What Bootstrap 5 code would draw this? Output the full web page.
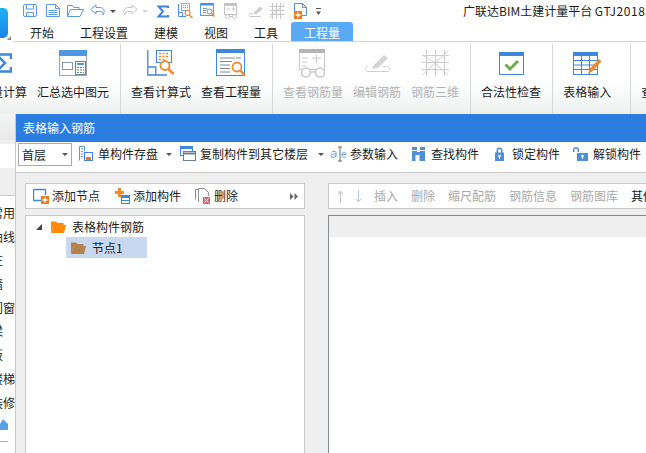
<!DOCTYPE html>
<html lang="zh-CN">
<head>
  <meta charset="UTF-8" />
  <meta name="viewport" content="width=device-width, initial-scale=1.0" />
  <title>表格输入钢筋</title>
  <link href="https://cdn.jsdelivr.net/npm/bootstrap@5.3.0/dist/css/bootstrap.min.css" rel="stylesheet" />
  <style>
    html, body { height: 100%; overflow: hidden; }
    body { font: 12px/16px "Noto Sans CJK SC", "Liberation Sans", sans-serif; color: #1c1c1c; background: #fff; }
    svg { display: block; flex: none; }

    .app-shell { width: 646px; height: 453px; overflow: hidden; }
    .logo-box { width: 13px; height: 42px; flex: none; }
    .logo-mark { width: 8px; height: 30px; margin-top: 8px; border-radius: 0 5px 5px 0; background: linear-gradient(#1fb0f5, #1a84e8); }
    .logo-tip { right: 2px; top: 36px; border-left: 4px solid transparent; border-bottom: 4px solid #888; }

    .quick-row { display: grid; height: 22px; align-items: center; padding-left: 10px; grid-template-columns: 23px 21px 23px 20px 12px 20px 15px 20px 23px 24px 24px 21px 25px 22px 147px 200px; }
    .app-title { white-space: nowrap; width: 200px; }
    .title-ver { letter-spacing: .6px; }
    .tab-row { height: 20px; border-bottom: 1px solid #d4d4d4; padding-left: 4px; }
    .tab-row .nav-link { padding: 0 13px; height: 19px; line-height: 21px; color: #1c1c1c; font-size: 12px; border-radius: 3px 3px 0 0; }
    .tab-row .nav-link.active { background: #5aa9f5; color: #fff; }

    .ribbon { height: 72px; background: linear-gradient(#fff 55%, #eef0f0); }
    .rb-group { height: 70px; margin-top: 2px; padding: 0 6px 0 5px; border-right: 1px solid #d6d8d8; flex: none; }
    .rb-first { margin-left: -43px; }
    .rb-wide { padding-right: 14px; }
    .rb-item { padding: 0 5px; white-space: nowrap; }
    .rb-ico { height: 30px; margin-top: 4px; margin-bottom: 6px; }
    .rb-off { color: #b4b4b4; }

    .side-strip { width: 15px; height: 339px; background: #efefef; flex: none; }
    .strip-top { height: 26px; background: linear-gradient(#f3f4f4, #e9e9e9); }
    .strip-input { height: 24px; margin-top: 4px; background: #fff; }
    .strip-list { height: 258px; margin-top: 27px; background: #fff; border-top: 1px solid #c8c8d0; padding-top: 9px; }
    .strip-name { height: 23.7px; margin-left: -9px; white-space: nowrap; }
    .strip-rule { height: 1px; width: 8px; margin-top: 11px; background: #a9a9a9; }

    .dlg { width: 631px; height: 339px; background: #efefef; border-left: 1px solid #c8c8d0; flex: none; }
    .dlg-title { height: 28px; margin-left: -1px; padding-left: 8px; line-height: 28px; background: #2b7ddf; color: #fff; }
    .dlg-tools { height: 31px; padding: 1px 0 0 2px; gap: 2px; background: #fff; border-bottom: 1px solid #c8c8c8; white-space: nowrap; }
    .floor-pick { width: 54px; height: 23px; flex: none; padding: 0 3px 0 3px; border: 1px solid #aaa; border-radius: 0; font-size: 12px; color: #1c1c1c; }
    .tbtn { height: 22px; padding: 0 5px; border-radius: 3px; background: #fff; flex: none; }
    .drop-tip { width: 0; height: 0; border-left: 3px solid transparent; border-right: 3px solid transparent; border-top: 3px solid #555; }
    .tip-a { margin-left: 8px; margin-right: -4px; }
    .tip-b { margin-left: 10px; margin-right: -6px; }

    .dlg-body { padding: 10px 0 0 9px; gap: 23px; }
    .pane-l { width: 280px; flex: none; }
    .pane-r { width: 318px; flex: none; }
    .pane-bar { height: 26px; margin-bottom: 6px; gap: 2px; padding: 1px 2px; background: #fff; border: 1px solid #c8c8c8; white-space: nowrap; }
    .pane-bar .tbtn { padding: 0 7px 0 5px; }
    .bar-r { gap: 1px; border-right: 0; overflow: hidden; }
    .bar-r .tbtn { padding: 0 6px; color: #aaa; }
    .bar-r .tbtn.on { color: #1c1c1c; }
    .bar-r .arrow-btn { padding: 0; width: 18px; }
    .bar-r .arrow-btn + .arrow-btn { width: 17px; }
    .tree-box { height: 240px; background: #fff; border: 1px solid #c8c8c8; border-bottom: 0; padding-left: 10px; }
    .tree-row { height: 21px; }
    .tree-tri { width: 0; height: 0; margin-right: 9px; border-left: 6px solid transparent; border-bottom: 6px solid #444; }
    .tree-sel { width: 81px; margin-left: 30px; padding-left: 5px; background: #c8d8ef; }
    .grid-box { height: 240px; background: #fff; border: 1px solid #868b90; border-right: 0; border-bottom: 0; }
    .grid-head { height: 21px; background: #efefef; }
  </style>
</head>
<body>
<div class="app-shell">

  <!-- title area -->
  <div class="d-flex">
    <div class="logo-box position-relative">
      <div class="logo-mark"></div>
      <div class="logo-tip position-absolute"></div>
    </div>
    <div class="flex-grow-1">
      <div class="quick-row">
        <svg width="15" height="14" viewBox="0 0 15 14" fill="none" stroke="#5b9bdf"><rect x=".5" y=".5" width="13" height="12" rx="1.5"/><path d="M3.500 1v4h7V1M3.500 13V8.500h7V13"/><path d="M5 10v2" stroke="#a8c8ee"/></svg>
        <svg width="15" height="14" viewBox="0 0 15 14" fill="none" stroke="#5b9bdf"><path d="M.5.5h9l4 4v8H.5z"/><path d="M9.500.5v4h4M2.500 6.500h9M2.500 8.500h9M2.500 10.500h9"/></svg>
        <svg width="17" height="14" viewBox="0 0 17 14" fill="none" stroke="#5b9bdf"><path d="M.5 12.500v-11h5l1.500 2h5v2"/><path d="M.5 12.500l3-7h13l-3.500 7z"/></svg>
        <svg width="16" height="14" viewBox="0 0 16 14" fill="none" stroke="#5b9bdf"><path d="M6 1L.8 5.500 6 10V7.500h4c2 0 3 1 3 3.500 2-3 1.500-7-2.500-7.500H6z"/></svg>
        <div class="drop-tip"></div>
        <svg width="16" height="14" viewBox="0 0 16 14" fill="none" stroke="#c4c4c4"><path d="M10 1l5.200 4.500L10 10V7.500H6c-2 0-3 1-3 3.500C1 8 1.500 4 5.500 3.500H10z"/></svg>
        <div class="drop-tip opacity-25"></div>
        <svg width="12" height="13" viewBox="0 0 12 13" fill="none" stroke="#3f87d8" stroke-width="2"><path d="M11 3V1.500H1.500L6 6.500 1.500 11.500H11V10"/></svg>
        <svg width="17" height="17" viewBox="0 0 17 17" fill="none"><path d="M1.500 1v12.500H9M1.500 9.500h4v4" stroke="#4a8fd8"/><rect x="4.500" y=".5" width="8" height="7" stroke="#7fb0e6" fill="#fff"/><path d="M6 2.500h5M6 4.500h5" stroke="#ee8a2a" stroke-dasharray="1 1"/><circle cx="10.500" cy="10" r="2.500" stroke="#ee8a2a" stroke-width="1.200"/><path d="M12.500 12l3 3" stroke="#ee8a2a" stroke-width="1.500"/></svg>
        <svg width="16" height="16" viewBox="0 0 16 16" fill="none"><rect x=".5" y=".5" width="13" height="12" stroke="#5b9bdf" fill="#fff"/><path d="M1 1.500h12" stroke="#4a8fd8" stroke-width="2"/><path d="M3 5.500h4M3 7.500h3M3 9.500h3" stroke="#7d99b8"/><circle cx="9.500" cy="8.500" r="2.500" stroke="#5b8fc8"/><path d="M11.500 10.500l3 3" stroke="#ee8a2a" stroke-width="1.500"/></svg>
        <svg width="15" height="17" viewBox="0 0 15 17" fill="none" stroke="#c4c4c4"><rect x=".5" y=".5" width="12" height="11"/><path d="M1 2h11" stroke-width="2"/><path d="M3 6h3M8 6h3M9.500 4v4"/><circle cx="3.500" cy="13.500" r="2"/><circle cx="10.500" cy="13.500" r="2"/><path d="M5.500 13.500h3"/></svg>
        <svg width="15" height="14" viewBox="0 0 15 14" fill="none" stroke="#c8c8c8"><path d="M1 11.500c0-2 2-2 4-2M1.500 12.500h11"/><path d="M6 9l6-6 2 2-6 5z" fill="#d0d0d0"/></svg>
        <svg width="16" height="16" viewBox="0 0 16 16" fill="none" stroke="#c8c8c8"><path d="M.5 3.500h15M.5 7.500h15M.5 11.500h15M3.500 0v16M7.500 0v16M11.500 0v16M.5 15l7-7 8-7"/></svg>
        <svg width="13" height="17" viewBox="0 0 13 17" fill="none"><path d="M.5 9V.5h8l4 4v8H8" stroke="#5b8fc8"/><path d="M8.500.5v4h4" stroke="#5b8fc8"/><rect y="8" width="8" height="8" fill="#ee7d1e"/><path d="M4 9.500v5M1.500 12h5" stroke="#fff" stroke-width="1.300"/></svg>
        <svg width="5" height="9" viewBox="0 0 5 9"><path d="M0 1.500h5" stroke="#555"/><path d="M0 4.500h5L2.500 8z" fill="#555"/></svg>
        <div class="app-title">广联达BIM土建计量平台 <span class="title-ver">GTJ2018</span></div>
      </div>
      <ul class="nav tab-row">
        <li class="nav-item"><a class="nav-link" href="#">开始</a></li>
        <li class="nav-item"><a class="nav-link" href="#">工程设置</a></li>
        <li class="nav-item"><a class="nav-link" href="#">建模</a></li>
        <li class="nav-item"><a class="nav-link" href="#">视图</a></li>
        <li class="nav-item"><a class="nav-link" href="#">工具</a></li>
        <li class="nav-item"><a class="nav-link active" href="#">工程量</a></li>
      </ul>
    </div>
  </div>

  <!-- ribbon -->
  <div class="ribbon d-flex overflow-hidden">
    <div class="rb-group rb-first d-flex">
      <div class="rb-item d-flex flex-column align-items-center">
        <div class="rb-ico d-flex align-items-center">
          <svg width="30" height="20" viewBox="0 0 30 20" fill="none" stroke="#3f87d8" stroke-width="2.500"><path d="M29 6V1.500H14.500L23 10 14.500 18.500H29V14"/></svg>
        </div>
        <div>工程量计算</div>
      </div>
      <div class="rb-item flex-column d-flex align-items-center">
        <div class="rb-ico d-flex align-items-center">
          <svg width="28" height="26" viewBox="0 0 28 26" fill="none"><rect x=".5" y=".5" width="27" height="25" fill="#fff" stroke="#9aa5b1"/><rect width="28" height="6" fill="#4f97e3"/><rect x="3.500" y="12.500" width="10" height="7" stroke="#8a97a5"/><rect x="16.500" y="11.500" width="10" height="13" stroke="#6f8092" fill="#fff"/><path d="M18 14h7" stroke="#4f97e3" stroke-width="2"/><path d="M18 17.500h7M18 20h7M18 22.500h7" stroke="#6f8092" stroke-dasharray="2 1"/></svg>
        </div>
        <div>汇总选中图元</div>
      </div>
    </div>

    <div class="rb-group d-flex">
      <div class="rb-item d-flex flex-column align-items-center">
        <div class="rb-ico d-flex align-items-center">
          <svg width="28" height="26" viewBox="0 0 28 26" fill="none"><path d="M.8 0v25H20M.8 17h8v8" stroke="#3f87d8" stroke-width="1.300"/><rect x="9.500" y=".5" width="15" height="12" fill="#fff" stroke="#3f87d8"/><path d="M12 3.500h10M12 6.500h10M12 9.500h6" stroke="#ee8a2a" stroke-width="1.500" stroke-dasharray="2 1.500"/><circle cx="18" cy="15.500" r="4.500" fill="#fff" stroke="#ee8a2a" stroke-width="1.800"/><path d="M21.500 19l5 5" stroke="#ee8a2a" stroke-width="2.500"/></svg>
        </div>
        <div>查看计算式</div>
      </div>
      <div class="rb-item d-flex flex-column align-items-center">
        <div class="rb-ico d-flex align-items-center">
          <svg width="30" height="29" viewBox="0 0 30 29" fill="none"><rect x=".5" y=".5" width="28" height="26" fill="#fff" stroke="#3f87d8"/><rect width="29" height="4" fill="#3f87d8"/><path d="M4 9h15M4 12.500h12M4 16h10M4 19.500h10M4 23h10" stroke="#7d8a98"/><path d="M20 9h5" stroke="#7d8a98"/><circle cx="21" cy="18" r="4.500" fill="#fff" stroke="#ee8a2a" stroke-width="1.800"/><path d="M24.500 21.500l4.500 5" stroke="#ee8a2a" stroke-width="2.500"/></svg>
        </div>
        <div>查看工程量</div>
      </div>
    </div>

    <div class="rb-group d-flex rb-off">
      <div class="rb-item d-flex flex-column align-items-center">
        <div class="rb-ico d-flex align-items-center">
          <svg width="28" height="29" viewBox="0 0 28 29" fill="none" stroke="#c8c8c8"><rect x=".5" y=".5" width="25" height="20" fill="#fff"/><rect width="26" height="4" fill="#b4b4b4" stroke="none"/><path d="M3 9h6M3 13h5M3 17h4M13 9h9M17.500 6v8" /><circle cx="7" cy="23.500" r="4.500" fill="#fff" stroke-width="1.500"/><circle cx="21" cy="23.500" r="4.500" fill="#fff" stroke-width="1.500"/><path d="M11.500 23h5" stroke-width="1.500"/></svg>
        </div>
        <div>查看钢筋量</div>
      </div>
      <div class="rb-item d-flex flex-column align-items-center">
        <div class="rb-ico d-flex align-items-center">
          <svg width="26" height="20" viewBox="0 0 26 20" fill="none" stroke="#cfcfcf"><path d="M4 12.500C1 13 .5 18.500 4 18.500h20c2 0 2-4-.5-5H19"/><path d="M9 13l11-11 4 3-10 10-6 1z" fill="#d4d4d4" stroke="none"/></svg>
        </div>
        <div>编辑钢筋</div>
      </div>
      <div class="rb-item d-flex flex-column align-items-center">
        <div class="rb-ico d-flex align-items-center">
          <svg width="27" height="26" viewBox="0 0 27 26" fill="none" stroke="#cdcdcd"><path d="M4.500 0v26M13.500 0v26M22.500 0v26M0 5.500h27M0 12.500h27M0 19.500h27M.5 25L13 13 26 1M0 5l13 8 13 12"/></svg>
        </div>
        <div>钢筋三维</div>
      </div>
    </div>

    <div class="rb-group d-flex">
      <div class="rb-item d-flex flex-column align-items-center">
        <div class="rb-ico d-flex align-items-center">
          <svg width="25" height="23" viewBox="0 0 25 23" fill="none"><rect x=".5" y=".5" width="24" height="22" fill="#fff" stroke="#3f87d8"/><rect width="25" height="4" fill="#3f87d8"/><path d="M6.500 12.500l4.500 4.500 8-8" stroke="#72a84f" stroke-width="3"/></svg>
        </div>
        <div>合法性检查</div>
      </div>
    </div>

    <div class="rb-group rb-wide d-flex">
      <div class="rb-item d-flex flex-column align-items-center">
        <div class="rb-ico d-flex align-items-center">
          <svg width="29" height="23" viewBox="0 0 29 23" fill="none"><rect x=".5" y=".5" width="24" height="22" fill="#fff" stroke="#3f87d8"/><rect width="25" height="4" fill="#3f87d8"/><path d="M1 8.500h23M1 13h23M1 17.500h23M8.500 4v18M16.500 4v18" stroke="#3f87d8"/><path d="M15 22l1.500-5L26 7l2.500 2.500-9.500 10z" fill="#ee8a2a"/></svg>
        </div>
        <div>表格输入</div>
      </div>
    </div>

    <div class="rb-group border-0 d-flex">
      <div class="rb-item d-flex flex-column align-items-start">
        <div class="rb-ico"></div>
        <div>查看报表</div>
      </div>
    </div>
  </div>

  <div class="d-flex">
    <!-- what shows of the left panel behind the dialog -->
    <div class="side-strip overflow-hidden">
      <div class="strip-top"></div>
      <div class="strip-input"></div>
      <div class="strip-list overflow-hidden">
        <div class="strip-name">常用</div>
        <div class="strip-name">曲线</div>
        <div class="strip-name">柱</div>
        <div class="strip-name">墙</div>
        <div class="strip-name">门窗</div>
        <div class="strip-name">梁</div>
        <div class="strip-name">板</div>
        <div class="strip-name">楼梯</div>
        <div class="strip-name">装修</div>
        <svg width="8" height="12" viewBox="0 0 8 12"><path d="M0 6l3-5 5 5v6H0z" fill="#5aa0ea"/></svg>
        <div class="strip-rule"></div>
      </div>
    </div>

    <!-- dialog -->
    <div class="dlg overflow-hidden">
      <div class="dlg-title">表格输入钢筋</div>

      <div class="dlg-tools d-flex">
        <button class="btn floor-pick d-flex align-items-center justify-content-between" type="button">首层<span class="drop-tip"></span></button>

        <div class="tbtn d-flex align-items-center">
          <svg width="19" height="16" viewBox="0 0 19 16" fill="none"><path d="M.5 14.500V.5h5v5" stroke="#5b9bdf"/><path d="M2 3h2M2 5.500h2M2 8h2M2 10.500h2" stroke="#5b9bdf"/><rect x="5.500" y="6.500" width="8" height="8" fill="#fff" stroke="#3f87d8"/><rect x="7" y="11" width="5" height="3" fill="#ee7d1e"/></svg>
          <span>单构件存盘</span><span class="drop-tip tip-a"></span>
        </div>
        <div class="tbtn d-flex align-items-center">
          <svg width="20" height="16" viewBox="0 0 20 16" fill="none"><rect x=".5" y=".5" width="12" height="9" fill="#fff" stroke="#3f87d8"/><path d="M1 2h11" stroke="#3f87d8" stroke-width="2"/><rect x="3.500" y="5.500" width="12" height="9" fill="#fff" stroke="#6f7f90"/><path d="M4 7.500h11" stroke="#6f7f90" stroke-width="2"/></svg>
          <span>复制构件到其它楼层</span><span class="drop-tip tip-b"></span>
        </div>
        <div class="tbtn d-flex align-items-center">
          <svg width="20" height="16" viewBox="0 0 20 16" fill="none"><path d="M6 11V6.500C6 5 2 5 1.500 6.500M6 8C2 8 .5 8.500 1 10.500c.5 1 3.500 1 5-.5" stroke="#5b9bdf"/><path d="M8 1h4M8 15h4M10 1v14" stroke="#666"/><path d="M12.500 8.500h3.500c0-3-4-3-4 0s2.500 3.500 4 2" stroke="#5b9bdf"/></svg>
          <span>参数输入</span>
        </div>
        <div class="tbtn d-flex align-items-center">
          <svg width="21" height="16" viewBox="0 0 21 16"><path d="M2 1h5v3H2zM10 1h5v3h-5zM2 5h5v1h3V5h5v10H9.500V9h-4v6H2z" fill="#4f8fd8"/></svg>
          <span>查找构件</span>
        </div>
        <div class="tbtn d-flex align-items-center">
          <svg width="21" height="16" viewBox="0 0 21 16"><path d="M2 6.500h1.500V4.500a3 3 0 016 0v2H11V15H2zM5 6.500h3V4.500a1.500 1.500 0 00-3 0z" transform="translate(2 0)" fill="#4f8fd8" fill-rule="evenodd"/><circle cx="8.500" cy="10" r="1.300" fill="#fff"/><path d="M8 10h1v3H8z" fill="#fff"/></svg>
          <span>锁定构件</span>
        </div>
        <div class="tbtn d-flex align-items-center">
          <svg width="21" height="16" viewBox="0 0 21 16"><path d="M1 6V4a3 3 0 016 0v2H5.500V4a1.500 1.500 0 00-3 0v2z" fill="#4f8fd8"/><path d="M5 7h11v8H5z" fill="#4f8fd8"/><circle cx="10.500" cy="10" r="1.300" fill="#fff"/><path d="M10 10h1v3h-1z" fill="#fff"/></svg>
          <span>解锁构件</span>
        </div>
      </div>

      <div class="dlg-body d-flex">
        <div class="pane-l">
          <div class="pane-bar d-flex align-items-center">
            <div class="tbtn d-flex align-items-center">
              <svg width="19" height="16" viewBox="0 0 19 16" fill="none"><path d="M8 12.500H1.500a1 1 0 01-1-1v-9a1 1 0 011-1h10a1 1 0 011 1V7" stroke="#3f87d8" stroke-width="1.400"/><rect x="8" y="8" width="8" height="8" fill="#ee7d1e"/><path d="M12 9.500v5M9.500 12h5" stroke="#fff" stroke-width="1.300"/></svg>
              <span>添加节点</span>
            </div>
            <div class="tbtn d-flex align-items-center">
              <svg width="19" height="16" viewBox="0 0 19 16" fill="none"><path d="M4 0h3v3h3v3H7v3H4V6H1V3h3z" fill="#ee8a2a"/><rect x="7.500" y="7.500" width="8" height="8" fill="#fff" stroke="#3f87d8"/><path d="M8 9h7" stroke="#3f87d8" stroke-width="2"/><path d="M8 12.500h7" stroke="#3f87d8"/></svg>
              <span>添加构件</span>
            </div>
            <div class="tbtn d-flex align-items-center">
              <svg width="19" height="16" viewBox="0 0 19 16" fill="none"><path d="M3 1.500H.5v10" stroke="#8a8f95"/><path d="M3.500 14V.5h6l4 4V8" stroke="#8a8f95"/><rect x="8" y="9" width="7" height="7" fill="#e2616a"/><path d="M9.500 10.500l4 4M13.500 10.500l-4 4" stroke="#fff"/></svg>
              <span>删除</span>
            </div>
            <svg class="ms-auto me-1" width="8" height="7" viewBox="0 0 8 7"><path d="M0 0l3.500 3.500L0 7zM4.500 0L8 3.500 4.500 7z" fill="#666"/></svg>
          </div>
          <div class="tree-box">
            <div class="tree-row d-flex align-items-center">
              <span class="tree-tri"></span>
              <svg width="21" height="14" viewBox="0 0 21 14"><path d="M0 1.500h5l1.500 1.500h6v2H3L0 13z" fill="#ff8a0a"/><path d="M3 5h12l-2 8H0z" fill="#ff8a0a"/></svg>
              <span>表格构件钢筋</span>
            </div>
            <div class="tree-row tree-sel d-flex align-items-center">
              <svg width="21" height="14" viewBox="0 0 21 14"><path d="M0 1.500h5l1.500 1.500h6v2H3L0 13z" fill="#b5834d"/><path d="M3 5h12l-2 8H0z" fill="#b5834d"/></svg>
              <span>节点1</span>
            </div>
          </div>
        </div>

        <div class="pane-r">
          <div class="pane-bar bar-r d-flex align-items-center">
            <div class="tbtn arrow-btn d-flex align-items-center justify-content-center">
              <svg width="7" height="13" viewBox="0 0 7 13" fill="none"><path d="M3.500 13V1M1 4l2.500-3L6 4" stroke="#c0c0c0"/></svg>
            </div>
            <div class="tbtn arrow-btn d-flex align-items-center justify-content-center">
              <svg width="7" height="13" viewBox="0 0 7 13" fill="none"><path d="M3.500 0v12M1 9l2.500 3L6 9" stroke="#b4c8de"/></svg>
            </div>
            <div class="tbtn d-flex align-items-center">插入</div>
            <div class="tbtn d-flex align-items-center">删除</div>
            <div class="tbtn d-flex align-items-center">缩尺配筋</div>
            <div class="tbtn d-flex align-items-center">钢筋信息</div>
            <div class="tbtn d-flex align-items-center">钢筋图库</div>
            <div class="tbtn on d-flex align-items-center">其他</div>
          </div>
          <div class="grid-box">
            <div class="grid-head"></div>
          </div>
        </div>
      </div>
    </div>
  </div>
</div>
<script src="https://cdn.jsdelivr.net/npm/bootstrap@5.3.0/dist/js/bootstrap.bundle.min.js"></script>
</body>
</html>
